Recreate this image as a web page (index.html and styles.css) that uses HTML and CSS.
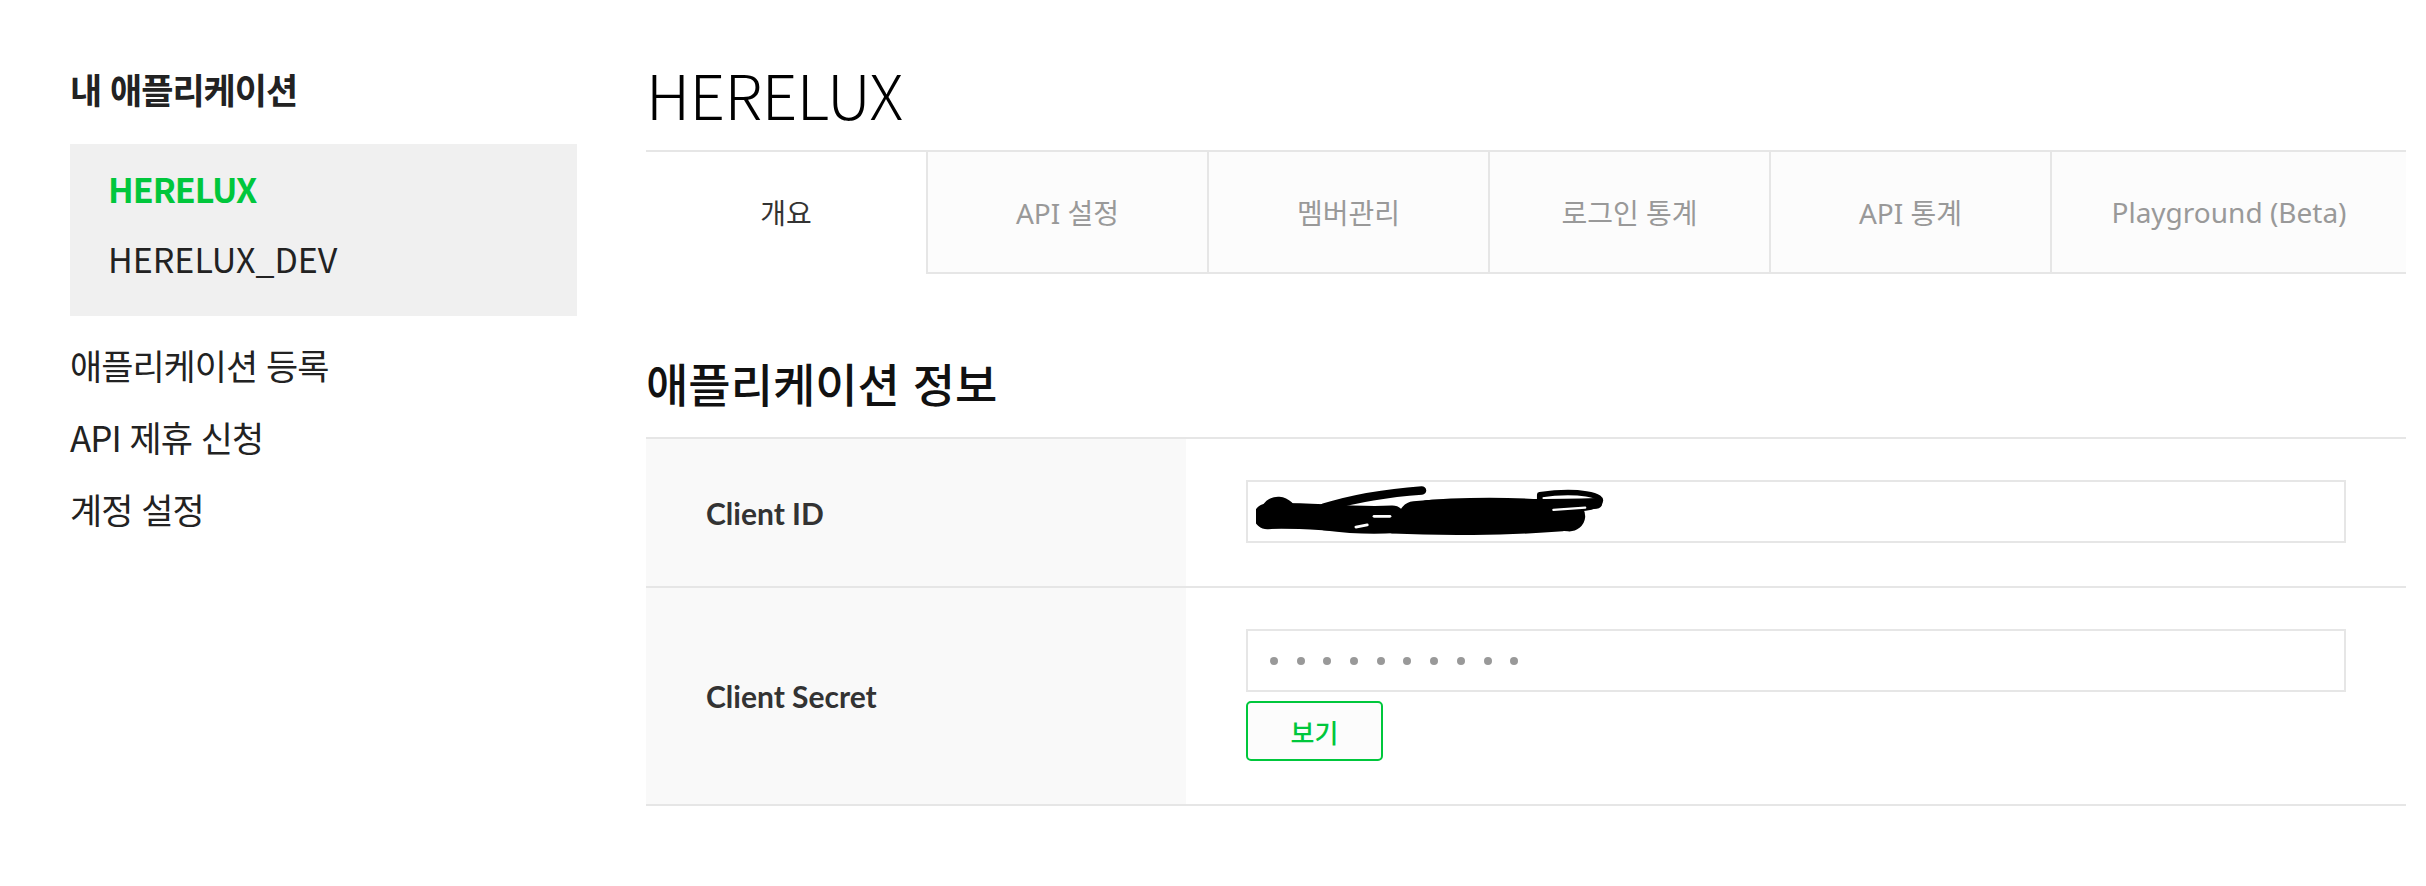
FILE: index.html
```html
<!DOCTYPE html>
<html lang="ko">
<head>
<meta charset="utf-8">
<title>HERELUX - 내 애플리케이션</title>
<link rel="stylesheet" href="styles.css">
</head>
<body>
<div class="page">
  <aside class="sidebar">
    <h2 class="side-title">내 애플리케이션</h2>
    <ul class="app-list">
      <li class="app active">HERELUX</li>
      <li class="app">HERELUX_DEV</li>
    </ul>
    <ul class="side-menu">
      <li>애플리케이션 등록</li>
      <li>API 제휴 신청</li>
      <li>계정 설정</li>
    </ul>
  </aside>
  <main class="main">
    <h1 class="app-name">HERELUX</h1>
    <nav class="tabs">
      <div class="tab active">개요</div>
      <div class="tab">API 설정</div>
      <div class="tab">멤버관리</div>
      <div class="tab">로그인 통계</div>
      <div class="tab">API 통계</div>
      <div class="tab last">Playground (Beta)</div>
    </nav>
    <h3 class="section-title">애플리케이션 정보</h3>
    <div class="info">
      <div class="row">
        <div class="label">Client ID</div>
        <div class="value">
          <div class="field">
            <svg class="scribble" width="420" height="56" viewBox="0 0 370 52" preserveAspectRatio="none">
              <g fill="none" stroke="#000" stroke-linecap="round" stroke-linejoin="round">
                <path d="M10 30 C 40 28, 80 34, 120 32" stroke-width="24"/>
                <path d="M12 28 C 14 18, 26 18, 28 30" stroke-width="18"/>
                <path d="M60 22 C 90 12, 120 8, 146 6" stroke-width="8"/>
                <path d="M60 36 C 90 40, 120 40, 140 36" stroke-width="14"/>
                <path d="M140 30 C 180 26, 230 26, 276 30" stroke-width="28"/>
                <path d="M150 20 C 190 18, 240 20, 300 18" stroke-width="10"/>
                <path d="M250 10 C 282 5, 310 10, 302 18 C 294 25, 262 25, 250 18 Z" stroke-width="5"/>
                <path d="M120 42 C 160 44, 220 44, 270 40" stroke-width="8"/>
              </g>
              <g stroke="#fff" stroke-linecap="round">
                <path d="M88 40 L 98 38" stroke-width="2.5"/>
                <path d="M104 30 L 118 30" stroke-width="2.5"/>
                <path d="M262 24 L 290 22" stroke-width="2"/>
              </g>
            </svg>
          </div>
        </div>
      </div>
      <div class="row">
        <div class="label">Client Secret</div>
        <div class="value">
          <div class="field dots">
            <span></span><span></span><span></span><span></span><span></span>
            <span></span><span></span><span></span><span></span><span></span>
          </div>
          <button class="btn-view" type="button">보기</button>
        </div>
      </div>
    </div>
  </main>
</div>
</body>
</html>
```

FILE: styles.css
```css
* { box-sizing: border-box; }

html, body {
  margin: 0;
  padding: 0;
  background: #fff;
}

body {
  font-family: "Noto Sans CJK KR", "Noto Sans", sans-serif;
  color: #333;
}

ul { list-style: none; margin: 0; padding: 0; }

.page {
  display: flex;
  padding: 0 20px 0 70px;
}

/* ---------- sidebar ---------- */
.sidebar {
  flex: 0 0 507px;
  padding-top: 63px;
}

.side-title {
  margin: 0;
  font-size: 35px;
  font-weight: 700;
  line-height: 52px;
  letter-spacing: -1px;
  color: #222;
}

.app-list {
  margin-top: 29px;
  background: #f0f0f0;
  padding: 10px 38px 22px;
}

.app {
  font-size: 34px;
  line-height: 70px;
  color: #222;
}

.app.active {
  color: #00c73c;
  font-weight: 700;
  letter-spacing: -1px;
}

.side-menu {
  margin-top: 13px;
}

.side-menu li {
  font-size: 35px;
  line-height: 72px;
  letter-spacing: -1px;
  color: #222;
}

/* ---------- main ---------- */
.main {
  flex: 1 1 auto;
  margin-left: 69px;
  padding-top: 53px;
}

.app-name {
  margin: 0;
  font-size: 62px;
  font-weight: 300;
  line-height: 80px;
  letter-spacing: -0.5px;
  color: #000;
}

.tabs {
  display: flex;
  margin-top: 17px;
  border-top: 2px solid #e6e6e6;
}

.tab {
  flex: 0 0 281px;
  height: 122px;
  display: flex;
  align-items: center;
  justify-content: center;
  font-family: "Noto Sans", "Noto Sans CJK KR", sans-serif;
  font-size: 28px;
  color: #999;
  background: #fcfcfc;
  border-left: 2px solid #e6e6e6;
  border-bottom: 2px solid #e6e6e6;
}

.tab.active {
  flex-basis: 280px;
  background: #fff;
  color: #333;
  border-left: 0;
  border-bottom-color: transparent;
}

.tab.last {
  flex: 1 1 auto;
}

.section-title {
  margin: 77px 0 0;
  font-size: 46px;
  font-weight: 500;
  line-height: 62px;
  letter-spacing: 0;
  color: #111;
}

.info {
  margin-top: 24px;
  border-top: 2px solid #e6e6e6;
}

.row {
  display: flex;
  border-bottom: 2px solid #e6e6e6;
}

.label {
  flex: 0 0 540px;
  display: flex;
  align-items: center;
  padding-left: 60px;
  background: #f9f9f9;
  font-family: "Lato", "Noto Sans", sans-serif;
  font-weight: 700;
  font-size: 30px;
  color: #333;
}

.value {
  flex: 1 1 auto;
  padding: 41px 60px 43px;
}

.field {
  height: 63px;
  border: 2px solid #e6e6e6;
  background: #fff;
  display: flex;
  align-items: center;
  padding-left: 8px;
}

.scribble { display: block; }

.dots {
  padding-left: 22px;
  gap: 18.7px;
}

.dots span {
  width: 8px;
  height: 8px;
  border-radius: 50%;
  background: #999;
}

.btn-view {
  display: block;
  margin-top: 9px;
  width: 137px;
  height: 60px;
  border: 2px solid #00c73c;
  border-radius: 5px;
  background: #fcfcfc;
  color: #00c73c;
  font-family: "Noto Sans CJK KR", sans-serif;
  font-size: 26px;
  font-weight: 500;
  padding: 0;
}
```
